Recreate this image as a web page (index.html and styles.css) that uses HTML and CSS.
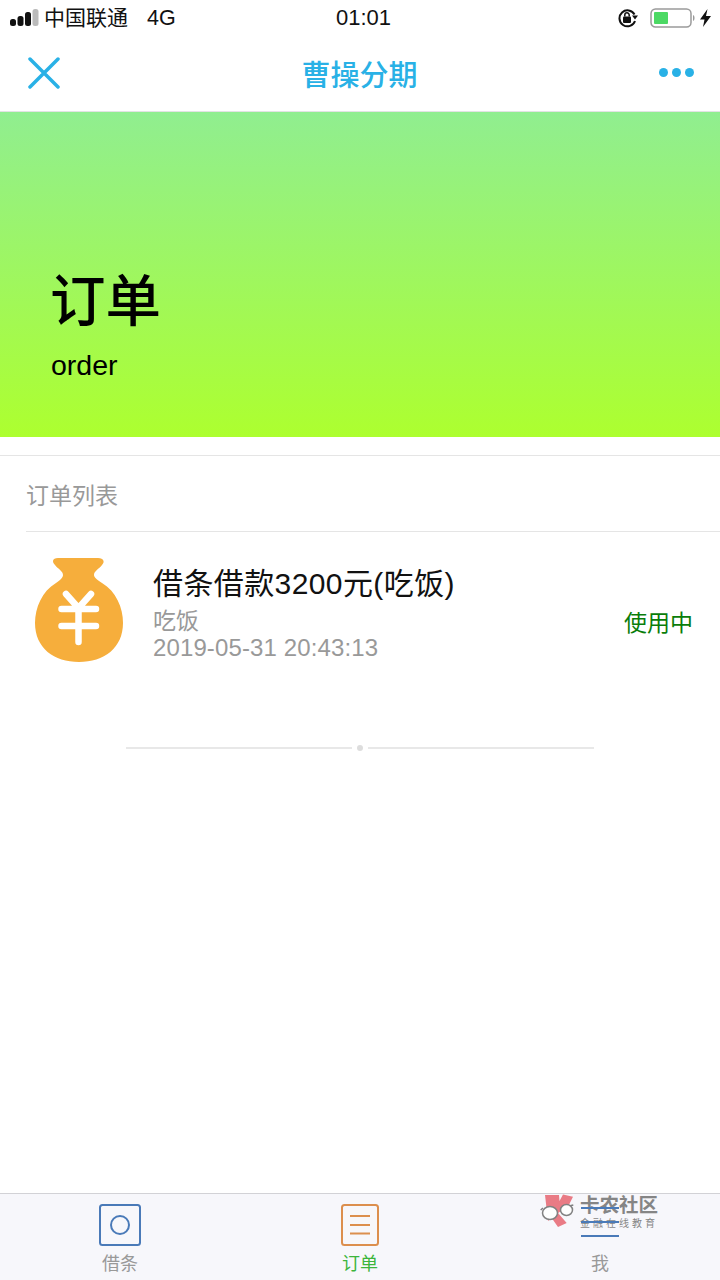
FILE: index.html
```html
<!DOCTYPE html>
<html lang="zh">
<head>
<meta charset="utf-8">
<title>曹操分期</title>
<link rel="stylesheet" href="styles.css">
</head>
<body>
<div class="page">
  <div class="status">
    <div class="status-left">
      <svg class="signal" width="30" height="17" viewBox="0 0 30 17"><rect x="0" y="10" width="6" height="7" rx="2.500" fill="#111"/><rect x="7.500" y="7" width="6" height="10" rx="2.500" fill="#111"/><rect x="15" y="3" width="6" height="14" rx="2.500" fill="#111"/><rect x="22.500" y="0" width="6" height="17" rx="2.500" fill="#bbb"/></svg>
      <span class="carrier">中国联通</span>
      <span class="net">4G</span>
    </div>
    <div class="clock">01:01</div>
    <div class="status-right">
      <svg class="lock" width="22" height="20" viewBox="0 0 22 20"><path d="M17.500 6.500A8 8 0 1 0 18 13" fill="none" stroke="#111" stroke-width="2"/><path d="M15 7.500h6l-3 4z" fill="#111"/><rect x="6" y="8.500" width="8" height="6.500" rx="1" fill="#111"/><path d="M7.800 8.500V7a2.200 2.200 0 0 1 4.400 0v1.500" fill="none" stroke="#111" stroke-width="1.500"/></svg>
      <svg class="battery" width="46" height="20" viewBox="0 0 46 20"><rect x="1" y="1" width="40" height="18" rx="4.500" fill="#fff" stroke="#9a9a9a" stroke-width="1.500"/><rect x="4" y="4" width="14" height="12" rx="1" fill="#4cd964"/><path d="M43 7c2 .5 2 5.500 0 6z" fill="#9a9a9a"/></svg>
      <svg class="bolt" width="11" height="18" viewBox="0 0 11 18"><path d="M7.500 0 0 10.500h4.500L3 18l8-11H6z" fill="#111"/></svg>
    </div>
  </div>

  <header class="nav">
    <svg class="close" width="32" height="32" viewBox="0 0 32 32"><path d="M2 2 30 30M30 2 2 30" stroke="#29b1e6" stroke-width="3.500" stroke-linecap="round"/></svg>
    <h1 class="nav-title">曹操分期</h1>
    <div class="dots"><i></i><i></i><i></i></div>
  </header>

  <section class="hero">
    <div class="hero-title">订单</div>
    <div class="hero-sub">order</div>
  </section>

  <main class="content">
    <div class="list-head">订单列表</div>
    <div class="order">
      <svg class="bag" width="90" height="104" viewBox="0 0 90 104">
        <path d="M24 0H64C70 0 71 4 68 7C65 11 60 13 60 17C60 20 64 22 68 25C82 33 89 50 89 65C89 90 70 104 45 104C20 104 1 90 1 65C1 50 8 33 22 25C26 22 29 20 29 17C29 13 24 11 21 7C18 4 18 0 24 0Z" fill="#f6ae3c"/>
        <path d="M32 36 44.500 50 57 36M27.500 51H62M27.500 68H62M44.500 50V84" fill="none" stroke="#fff" stroke-width="6.500" stroke-linecap="round" stroke-linejoin="round"/>
      </svg>
      <div class="order-info">
        <div class="order-title">借条借款3200元(吃饭)</div>
        <div class="order-note">吃饭</div>
        <div class="order-date">2019-05-31 20:43:13</div>
      </div>
      <div class="order-state">使用中</div>
    </div>
    <div class="end-line"><span></span><i></i><span></span></div>
  </main>

  <nav class="tabs">
    <div class="tab">
      <svg width="42" height="42" viewBox="0 0 42 42"><rect x="1" y="1" width="40" height="40" rx="2.500" fill="none" stroke="#4a7ab8" stroke-width="2"/><circle cx="21" cy="21" r="9" fill="none" stroke="#4a7ab8" stroke-width="2"/></svg>
      <span class="tab-label">借条</span>
    </div>
    <div class="tab">
      <svg width="38" height="42" viewBox="0 0 38 42"><rect x="1" y="1" width="36" height="40" rx="2.500" fill="none" stroke="#dc8f4e" stroke-width="2"/><path d="M9 12H29M9 21H29M9 29.500H29" stroke="#dc8f4e" stroke-width="2"/></svg>
      <span class="tab-label tab-on">订单</span>
    </div>
    <div class="tab">
      <div class="me-icon"><i></i><i></i><i></i></div>
      <span class="tab-label">我</span>
    </div>
    <div class="mark">
      <svg width="36" height="36" viewBox="0 0 36 36"><path d="M5 2H19L19.500 8L23 1.500L33 3.700L28 13.700L18 20L26.700 30L18 34L11.700 25L8 28Z" fill="#e8717c"/><path d="M.7 17 3 15M21 15 33.300 12" stroke="#777" stroke-width="1.500" fill="none"/><ellipse cx="10" cy="20" rx="7.500" ry="6.500" fill="#fff" stroke="#777" stroke-width="1.500"/><ellipse cx="26.500" cy="17" rx="6" ry="5.500" fill="#fff" stroke="#777" stroke-width="1.500"/></svg>
      <div class="mark-text"><b>卡农社区</b><small>金融在线教育</small></div>
    </div>
  </nav>
</div>
</body>
</html>
```

FILE: styles.css
```css
* { box-sizing: border-box; }
html, body { margin: 0; padding: 0; }
body {
  width: 720px;
  height: 1280px;
  overflow: hidden;
  background: #fff;
  font-family: "Liberation Sans", "Noto Sans CJK SC", sans-serif;
}
.page { width: 720px; height: 1280px; display: flex; flex-direction: column; }

.status {
  height: 37px;
  padding: 0 9px 2px 10px;
  display: flex;
  align-items: center;
  color: #111;
}
.status-left { display: flex; align-items: center; flex: 1; }
.signal { margin-right: 4px; }
.carrier { font-size: 21px; line-height: 24px; }
.net { margin-left: 19px; font-size: 21.500px; line-height: 24px; }
.clock { font-size: 22px; line-height: 24px; width: 100px; text-align: center; flex: none; margin-left: 3px; margin-right: -3px; }
.status-right { flex: 1; display: flex; justify-content: flex-end; align-items: center; }
.lock { margin-right: 11px; }
.battery { margin-right: 4px; }

.nav {
  height: 75px;
  padding: 0 25px 3px 28px;
  display: flex;
  align-items: center;
  justify-content: space-between;
  border-bottom: 1px solid #e3e3e3;
}
.close { flex: none; }
.nav-title {
  margin: 0;
  font-size: 29px;
  font-weight: 500;
  color: #29b1e6;
}
.dots { display: flex; gap: 4px; width: 36px; }
.dots i { width: 9px; height: 9px; border-radius: 50%; background: #29b1e6; }

.hero {
  height: 325px;
  padding: 158px 0 0 50px;
  background: linear-gradient(180deg, #90ee90 0%, #adff2f 100%);
  color: #000;
}
.hero-title { font-size: 55.500px; line-height: 64px; font-weight: 500; }
.hero-sub { font-size: 28.500px; line-height: 32px; margin-top: 15px; margin-left: 1px; }

.content { flex: 1; padding-top: 18px; }
.content::before {
  content: "";
  display: block;
  height: 1px;
  background: #e5e5e5;
}
.list-head {
  height: 76px;
  margin-left: 26px;
  padding-top: 24px;
  font-size: 23px;
  line-height: 33px;
  color: #999;
  border-bottom: 1px solid #e5e5e5;
}
.order {
  display: flex;
  align-items: flex-start;
  padding: 26px 27px 0 34px;
  height: 162px;
}
.bag { flex: none; }
.order-info { flex: 1; margin-left: 29px; margin-top: 5px; }
.order-title { font-size: 30px; line-height: 42px; color: #111; letter-spacing: .4px; }
.order-note { font-size: 23px; line-height: 28px; color: #999; margin-top: 2px; }
.order-date { font-size: 24px; line-height: 26px; color: #999; letter-spacing: .12px; }
.order-state { font-size: 23px; line-height: 30px; color: #0a7d0a; margin-top: 50px; }

.end-line {
  width: 468px;
  margin: 51px auto 0;
  display: flex;
  align-items: center;
  gap: 5px;
}
.end-line span { flex: 1; height: 2px; background: #e8e8e8; }
.end-line i { width: 6px; height: 6px; border-radius: 50%; background: #ddd; }

.tabs {
  height: 87px;
  background: #f7f7fb;
  border-top: 1px solid #d2d2d6;
  display: flex;
  position: relative;
}
.tab {
  flex: 1;
  display: flex;
  flex-direction: column;
  align-items: center;
  padding-top: 10px;
}
.tab svg { display: block; }
.tab-label { font-size: 18px; line-height: 24px; color: #999; margin-top: 6px; }
.tab-on { color: #3cb53c; }
.me-icon {
  width: 38px;
  height: 42px;
  display: flex;
  flex-direction: column;
  gap: 12px;
  padding-top: 3px;
  position: relative;
  z-index: 1;
}
.me-icon i { display: block; height: 2px; background: #4a7ab8; }
.mark {
  position: absolute;
  left: 540px;
  top: -1px;
  display: flex;
  align-items: flex-start;
  gap: 4px;
  opacity: .92;
}
.mark-text { display: flex; flex-direction: column; color: #7c7c7c; padding-top: 2px; }
.mark-text b { font-size: 19.500px; line-height: 20px; font-weight: 700; }
.mark-text small { font-size: 10px; line-height: 12px; letter-spacing: 3px; margin-top: 3px; white-space: nowrap; }
```
